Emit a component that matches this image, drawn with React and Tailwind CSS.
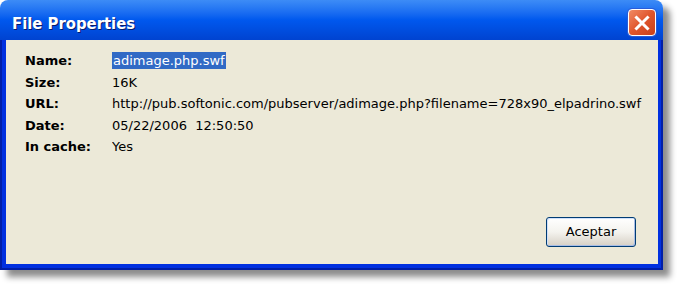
import React from 'react';

const rows = [
  { label: 'Name:', value: 'adimage.php.swf', selected: true },
  { label: 'Size:', value: '16K' },
  { label: 'URL:', value: 'http://pub.softonic.com/pubserver/adimage.php?filename=728x90_elpadrino.swf' },
  { label: 'Date:', value: '05/22/2006\u00a0\u00a012:50:50' },
  { label: 'In cache:', value: 'Yes' },
];

function CloseButton() {
  return (
    <div className="mt-[9px] w-[28px] h-[27px] rounded-[4px] border-[1.5px] border-white bg-gradient-to-br from-[#f08a64] via-[#e0552c] to-[#c8401a] flex items-center justify-center shadow-[0_0_0_1px_#2a5cd8]">
      <svg width="16" height="16" viewBox="0 0 16 16">
        <path d="M2.5 2.5 L13.5 13.5 M13.5 2.5 L2.5 13.5" stroke="#fff" strokeWidth="3" strokeLinecap="square" />
      </svg>
    </div>
  );
}

export default function App() {
  return (
    <div className="w-[680px] h-[286px] bg-white" style={{ fontFamily: '"DejaVu Sans", Tahoma, sans-serif' }}>
      <div className="w-[663px] h-[270px] flex flex-col rounded-t-[8px] overflow-hidden shadow-[7px_7px_6px_rgba(0,0,0,0.45)]">
        {/* title bar */}
        <div className="h-[40px] shrink-0 flex items-start justify-between pl-[12px] pr-[7px] bg-gradient-to-b from-[#3d8cf6] via-[#0058ee] to-[#0043d0]">
          <span
            className="mt-[14px] text-white font-bold text-[16.5px] leading-[20px]"
            style={{ fontFamily: '"DejaVu Sans Condensed", "Liberation Sans Narrow", "DejaVu Sans", sans-serif', textShadow: '1px 1px 0 #0a1a6a' }}
          >
            File Properties
          </span>
          <CloseButton />
        </div>
        {/* client */}
        <div className="flex-1 flex bg-[#0030e0] border-l-[2px] border-r-[2px] border-b-[2px] border-[#001ea8] pl-[4px] pr-[3px] pb-[4px]">
          <div className="flex-1 bg-[#ece9d8] flex flex-col pt-[10px] pl-[19px] pr-[14px] overflow-hidden">
            <div className="grid grid-cols-[87px_1fr] auto-rows-[21.5px] text-[13px] text-black">
              {rows.map((r) => (
                <React.Fragment key={r.label}>
                  <div className="font-bold flex items-center">{r.label}</div>
                  <div className="flex items-center overflow-hidden whitespace-nowrap">
                    {r.selected ? (
                      <span className="bg-[#316ac5] text-white px-[1px] leading-[17px]">{r.value}</span>
                    ) : (
                      <span>{r.value}</span>
                    )}
                  </div>
                </React.Fragment>
              ))}
            </div>
            <div className="flex-1 flex items-end justify-end pb-[17px] pr-[8px]">
              <button className="w-[90px] h-[30px] rounded-[3px] border border-[#003c74] bg-gradient-to-b from-white via-[#f4f3ee] to-[#d6d0c5] text-[13px] text-black shadow-[inset_-1px_-1px_0_#a8bde6,inset_1px_1px_0_#cfe0fb]">
                Aceptar
              </button>
            </div>
          </div>
        </div>
      </div>
    </div>
  );
}
